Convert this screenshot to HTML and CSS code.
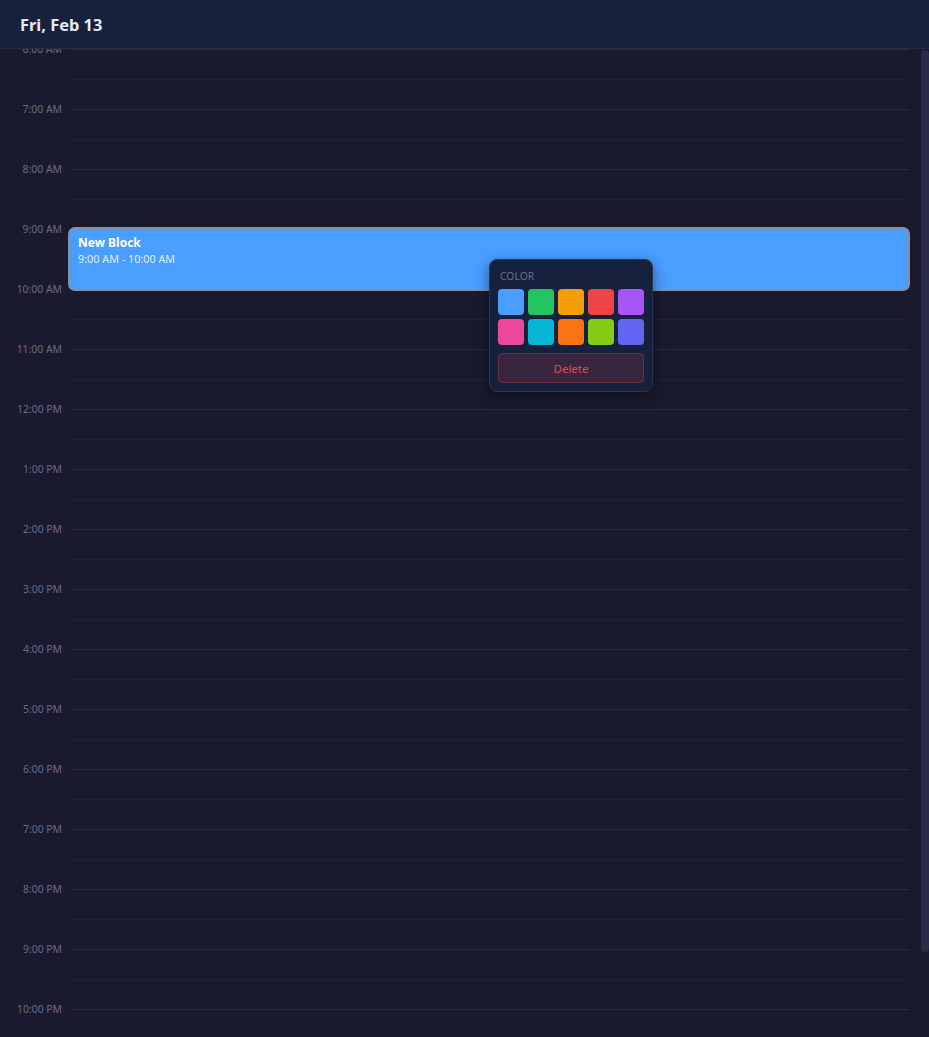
FILE: index.html
```html
<!DOCTYPE html>
<html lang="en">
<head>
<meta charset="utf-8">
<title>Day view</title>
<link rel="stylesheet" href="styles.css">
</head>
<body>
<div class="app">
  <header class="header"><h1 class="date">Fri, Feb 13</h1></header>
  <div class="body">
    <main class="scroll">
      <div class="grid">
        <div class="row"><span class="label">6:00 AM</span><div class="slot"></div></div>
        <div class="row"><span class="label">7:00 AM</span><div class="slot"></div></div>
        <div class="row"><span class="label">8:00 AM</span><div class="slot"></div></div>
        <div class="row"><span class="label">9:00 AM</span><div class="slot"></div></div>
        <div class="row"><span class="label">10:00 AM</span><div class="slot"></div></div>
        <div class="row"><span class="label">11:00 AM</span><div class="slot"></div></div>
        <div class="row"><span class="label">12:00 PM</span><div class="slot"></div></div>
        <div class="row"><span class="label">1:00 PM</span><div class="slot"></div></div>
        <div class="row"><span class="label">2:00 PM</span><div class="slot"></div></div>
        <div class="row"><span class="label">3:00 PM</span><div class="slot"></div></div>
        <div class="row"><span class="label">4:00 PM</span><div class="slot"></div></div>
        <div class="row"><span class="label">5:00 PM</span><div class="slot"></div></div>
        <div class="row"><span class="label">6:00 PM</span><div class="slot"></div></div>
        <div class="row"><span class="label">7:00 PM</span><div class="slot"></div></div>
        <div class="row"><span class="label">8:00 PM</span><div class="slot"></div></div>
        <div class="row"><span class="label">9:00 PM</span><div class="slot"></div></div>
        <div class="row"><span class="label">10:00 PM</span><div class="slot"></div></div>
        <div class="row"><span class="label">11:00 PM</span><div class="slot"></div></div>

        <div class="block">
          <div class="block-title">New Block</div>
          <div class="block-time">9:00 AM - 10:00 AM</div>
        </div>

        <div class="popup">
          <div class="popup-label">Color</div>
          <div class="swatches">
            <span class="swatch sw-blue"></span>
            <span class="swatch sw-green"></span>
            <span class="swatch sw-amber"></span>
            <span class="swatch sw-red"></span>
            <span class="swatch sw-purple"></span>
            <span class="swatch sw-pink"></span>
            <span class="swatch sw-cyan"></span>
            <span class="swatch sw-orange"></span>
            <span class="swatch sw-lime"></span>
            <span class="swatch sw-indigo"></span>
          </div>
          <button class="delete">Delete</button>
        </div>
      </div>
    </main>
    <div class="track"><div class="thumb"></div></div>
  </div>
</div>
</body>
</html>
```

FILE: styles.css
```css
* { box-sizing: border-box; }
html, body { margin: 0; padding: 0; height: 100%; }
body {
  background: #1a1a2e;
  font-family: "Noto Sans", "Open Sans", sans-serif;
  color: #e6e6f0;
  overflow: hidden;
}
.app {
  height: 100vh;
  display: flex;
  flex-direction: column;
}
.header {
  height: 49px;
  flex: 0 0 49px;
  background: #16213e;
  border-bottom: 1px solid #2a2a4a;
  display: flex;
  align-items: center;
  padding: 0 20px;
}
.date {
  margin: 0;
  font-size: 16.4px;
  font-weight: 700;
  color: #e8e8f2;
}
.body {
  flex: 1 1 auto;
  min-height: 0;
  display: flex;
}
.scroll {
  flex: 1 1 auto;
  overflow: hidden;
}
.track {
  flex: 0 0 8px;
  padding-top: 1px;
}
.thumb {
  height: 902px;
  background: #2a2a4a;
  border-radius: 4px;
}
.grid {
  position: relative;
  padding-right: 12px;
}
.row {
  display: grid;
  grid-template-columns: 70px 1fr;
  height: 60px;
}
.label {
  font-size: 10.4px;
  line-height: 14px;
  color: #6b6b88;
  text-align: right;
  padding-right: 8px;
  transform: translateY(-7px);
  white-space: nowrap;
}
.slot {
  border-top: 1px solid #2a2a46;
  position: relative;
}
.slot::after {
  content: "";
  position: absolute;
  left: 0;
  right: 0;
  top: 29px;
  border-top: 1px solid #21213a;
}
.block {
  position: absolute;
  left: 68px;
  top: 178px;
  width: 842px;
  height: 64px;
  background: #4a9eff;
  border: 2px solid #8a8f99;
  border-radius: 7px;
  padding: 5px 8px;
  color: #ffffff;
}
.block-title {
  font-size: 12px;
  font-weight: 700;
  line-height: 17px;
}
.block-time {
  font-size: 10.8px;
  line-height: 15px;
  color: rgba(255, 255, 255, 0.85);
}
.popup {
  position: absolute;
  left: 489px;
  top: 210px;
  width: 164px;
  background: #16213e;
  border: 1px solid #2a3552;
  border-radius: 8px;
  padding: 8px;
  box-shadow: 0 4px 14px rgba(0, 0, 0, 0.45);
}
.popup-label {
  font-size: 10.4px;
  line-height: 15px;
  padding-top: 1px;
  text-transform: uppercase;
  color: #6b6f88;
  padding-left: 2px;
  margin-bottom: 6px;
}
.popup-label + .swatches { margin-top: -1px; }
.swatches {
  display: grid;
  grid-template-columns: repeat(5, 26px);
  grid-auto-rows: 26px;
  gap: 4px;
}
.swatch { border-radius: 4px; display: block; }
.sw-blue { background: #4a9eff; }
.sw-green { background: #22c55e; }
.sw-amber { background: #f59e0b; }
.sw-red { background: #ef4444; }
.sw-purple { background: #a855f7; }
.sw-pink { background: #ec4899; }
.sw-cyan { background: #06b6d4; }
.sw-orange { background: #f97316; }
.sw-lime { background: #84cc16; }
.sw-indigo { background: #6366f1; }
.delete {
  display: block;
  width: 100%;
  height: 30px;
  margin-top: 8px;
  background: #3a2540;
  border: 1px solid #6e2c3f;
  border-radius: 4px;
  color: #e5484d;
  font-family: inherit;
  font-size: 11.5px;
  cursor: pointer;
}
```
